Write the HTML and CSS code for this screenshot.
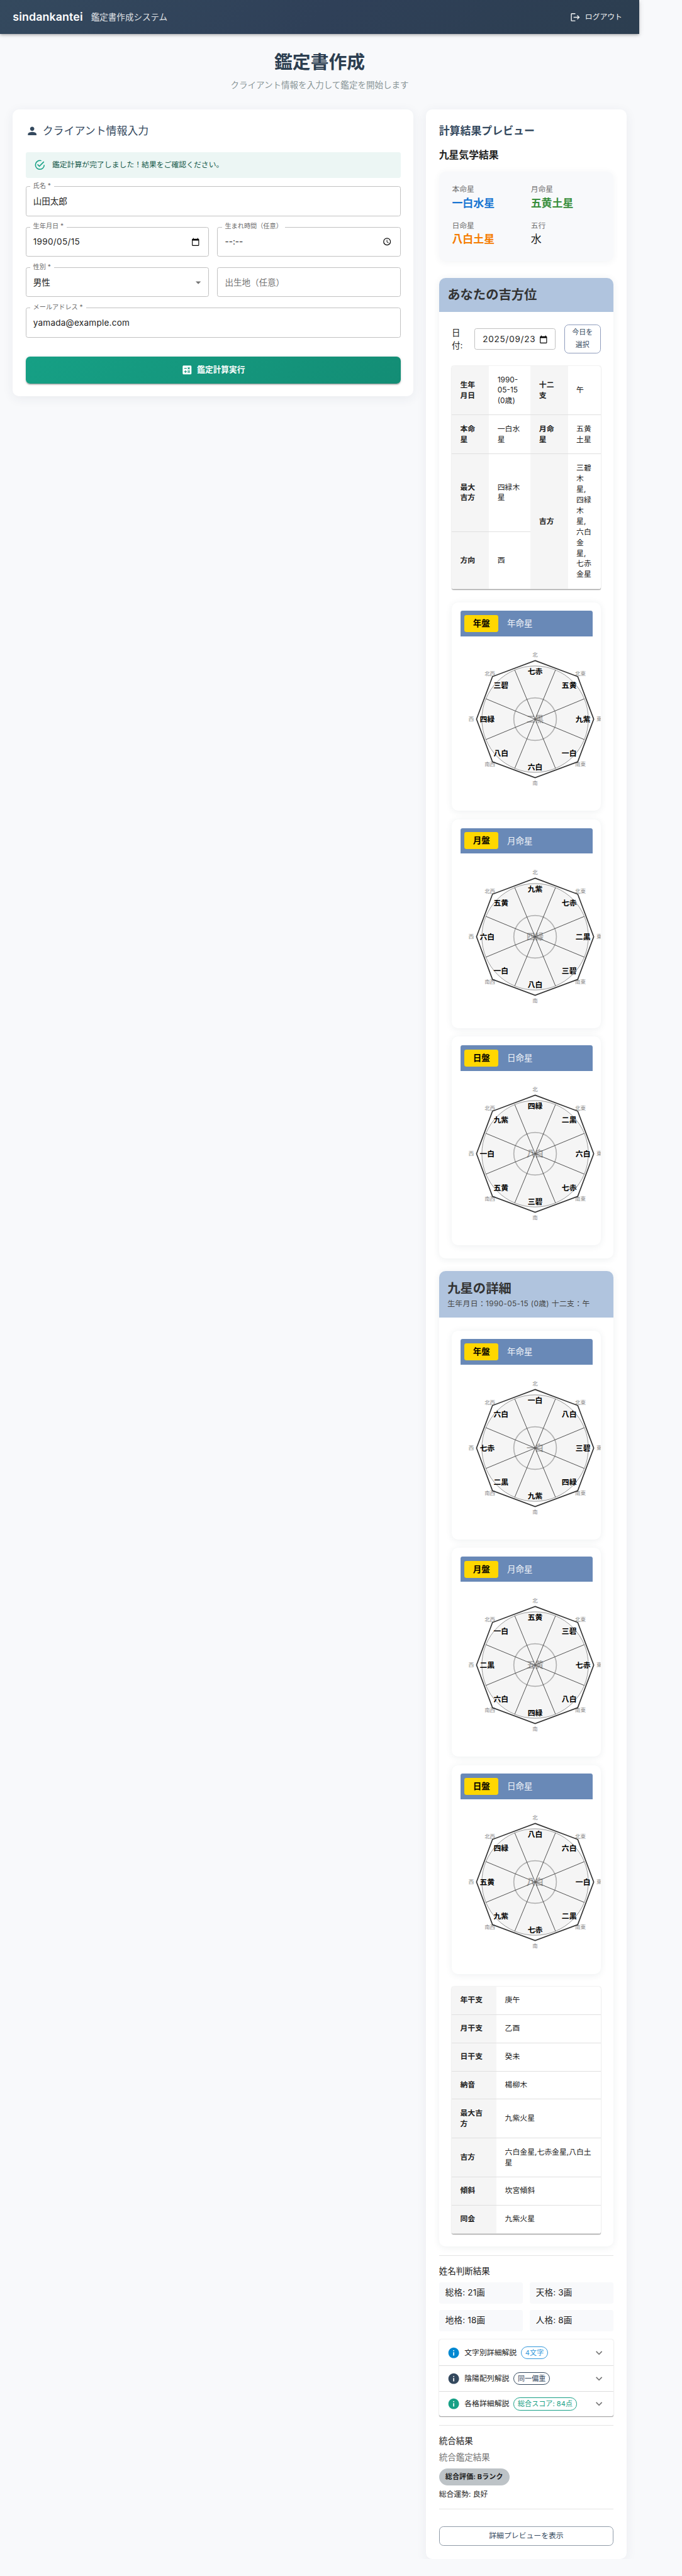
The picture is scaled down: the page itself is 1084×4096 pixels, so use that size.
FILE: index.html
```html
<!DOCTYPE html>
<html lang="ja">
<head>
<meta charset="utf-8">
<title>鑑定書作成</title>
<link rel="stylesheet" href="styles.css">
</head>
<body>
<header class="topbar">
  <span class="brand">sindankantei</span>
  <span class="system">鑑定書作成システム</span>
  <span class="logout">
    <svg width="20" height="20" viewBox="0 0 24 24"><path d="m17 7-1.410 1.410L18.170 11H8v2h10.170l-2.580 2.580L17 17l5-5zM4 5h8V3H4c-1.100 0-2 .9-2 2v14c0 1.100.9 2 2 2h8v-2H4z"/></svg>
    <span>ログアウト</span>
  </span>
</header>

<main class="page">
  <h1>鑑定書作成</h1>
  <p class="lead">クライアント情報を入力して鑑定を開始します</p>

  <div class="columns">
    <section class="card form-card">
      <h2 class="form-title">
        <svg width="24" height="24" viewBox="0 0 24 24"><path d="M12 12c2.210 0 4-1.790 4-4s-1.790-4-4-4-4 1.790-4 4 1.790 4 4 4zm0 2c-2.670 0-8 1.340-8 4v2h16v-2c0-2.660-5.330-4-8-4z"/></svg>
        <span>クライアント情報入力</span>
      </h2>
      <div class="alert">
        <svg width="22" height="22" viewBox="0 0 24 24"><path d="M20 12a8 8 0 0 1-8 8 8 8 0 0 1-8-8 8 8 0 0 1 8-8c.76 0 1.500.11 2.200.31l1.570-1.570A9.822 9.822 0 0 0 12 2 10 10 0 0 0 2 12a10 10 0 0 0 10 10 10 10 0 0 0 10-10M7.910 10.080 6.500 11.500 11 16 21 6l-1.410-1.420L11 13.170l-3.090-3.090z"/></svg>
        <span>鑑定計算が完了しました！結果をご確認ください。</span>
      </div>
      <div class="fields">
        <div class="field wide"><label>氏名 *</label><span class="value">山田太郎</span></div>
        <div class="field"><label>生年月日 *</label><span class="value date">1990/05/15</span><svg class="pick" width="16" height="16" viewBox="0 0 24 24"><path d="M20 3h-1V1h-2v2H7V1H5v2H4c-1.100 0-2 .9-2 2v16c0 1.100.9 2 2 2h16c1.100 0 2-.9 2-2V5c0-1.100-.9-2-2-2zm0 18H4V8h16v13z"/></svg></div>
        <div class="field"><label class="long">生まれ時間（任意）</label><span class="value">--:--</span><svg class="pick" width="17" height="17" viewBox="0 0 24 24"><path d="M12 2a10 10 0 1 0 0 20 10 10 0 0 0 0-20zm0 18a8 8 0 1 1 0-16 8 8 0 0 1 0 16zm.5-13H11v6l4.500 3.200.8-1.300-3.800-2.700z"/></svg></div>
        <div class="field"><label>性別 *</label><span class="value">男性</span><svg class="arrow" width="24" height="24" viewBox="0 0 24 24"><path d="m7 10 5 5 5-5z"/></svg></div>
        <div class="field"><span class="value hint">出生地（任意）</span></div>
        <div class="field wide"><label>メールアドレス *</label><span class="value mail">yamada@example.com</span></div>
      </div>
      <div class="submit">
        <svg width="22" height="22" viewBox="0 0 24 24"><path d="M19 3H5c-1.100 0-2 .9-2 2v14c0 1.100.9 2 2 2h14c1.100 0 2-.9 2-2V5c0-1.100-.9-2-2-2zm-5.970 4.060L14.090 6l1.410 1.410L16.910 6l1.060 1.060-1.410 1.410 1.410 1.410-1.060 1.060-1.410-1.400-1.410 1.410-1.060-1.060 1.410-1.410-1.410-1.420zm-6.780.66h5v1.500h-5v-1.500zM11.500 16h-2v2H8v-2H6v-1.500h2v-2h1.500v2h2V16zm6.500 1.250h-5v-1.500h5v1.500zm0-2.500h-5v-1.500h5v1.500z"/></svg>
        <span>鑑定計算実行</span>
      </div>
    </section>

    <section class="card result-card">
      <h2 class="result-title">計算結果プレビュー</h2>
      <h3 class="result-sub">九星気学結果</h3>

      <div class="stars">
        <div><small>本命星</small><b class="blue">一白水星</b></div>
        <div><small>月命星</small><b class="green">五黄土星</b></div>
        <div><small>日命星</small><b class="orange">八白土星</b></div>
        <div><small>五行</small><b class="plain">水</b></div>
      </div>

      <div class="panel first">
        <div class="panel-head"><h3>あなたの吉方位</h3></div>
        <div class="panel-body">
          <div class="date-row">
            <span class="date-label">日<br>付:</span>
            <span class="date-input"><span>2025/09/23</span><svg width="16" height="16" viewBox="0 0 24 24"><path d="M20 3h-1V1h-2v2H7V1H5v2H4c-1.100 0-2 .9-2 2v16c0 1.100.9 2 2 2h16c1.100 0 2-.9 2-2V5c0-1.100-.9-2-2-2zm0 18H4V8h16v13z"/></svg></span>
            <span class="today">今日を<br>選択</span>
          </div>
          <table class="info quad">
            <colgroup><col class="c1"><col class="c2"><col class="c3"><col class="c4"></colgroup>
            <tr class="r1"><th>生年<br>月日</th><td>1990-<br>05-15<br>(0歳)</td><th>十二<br>支</th><td>午</td></tr>
            <tr class="r2"><th>本命<br>星</th><td>一白水<br>星</td><th>月命<br>星</th><td>五黄<br>土星</td></tr>
            <tr class="r3"><th>最大<br>吉方</th><td>四緑木<br>星</td><th rowspan="2">吉方</th><td rowspan="2">三碧<br>木<br>星,<br>四緑<br>木<br>星,<br>六白<br>金<br>星,<br>七赤<br>金星</td></tr>
            <tr class="r4"><th>方向</th><td>西</td></tr>
          </table>

          <div class="chart">
            <div class="chart-head"><b>年盤</b><span>年命星</span></div>
            <svg class="chart-svg" width="280" height="280" viewBox="-140 -140 280 280" data-center="二黒" data-stars="七赤 五黄 九紫 一白 六白 八白 四緑 三碧"></svg>
          </div>
          <div class="chart">
            <div class="chart-head"><b>月盤</b><span>月命星</span></div>
            <svg class="chart-svg" width="280" height="280" viewBox="-140 -140 280 280" data-center="四緑" data-stars="九紫 七赤 二黒 三碧 八白 一白 六白 五黄"></svg>
          </div>
          <div class="chart">
            <div class="chart-head"><b>日盤</b><span>日命星</span></div>
            <svg class="chart-svg" width="280" height="280" viewBox="-140 -140 280 280" data-center="八白" data-stars="四緑 二黒 六白 七赤 三碧 五黄 一白 九紫"></svg>
          </div>
        </div>
      </div>

      <div class="panel">
        <div class="panel-head"><h3>九星の詳細</h3><p>生年月日：1990-05-15 (0歳) 十二支：午</p></div>
        <div class="panel-body">
          <div class="chart">
            <div class="chart-head"><b>年盤</b><span>年命星</span></div>
            <svg class="chart-svg" width="280" height="280" viewBox="-140 -140 280 280" data-center="一白" data-stars="一白 八白 三碧 四緑 九紫 二黒 七赤 六白"></svg>
          </div>
          <div class="chart">
            <div class="chart-head"><b>月盤</b><span>月命星</span></div>
            <svg class="chart-svg" width="280" height="280" viewBox="-140 -140 280 280" data-center="五黄" data-stars="五黄 三碧 七赤 八白 四緑 六白 二黒 一白"></svg>
          </div>
          <div class="chart">
            <div class="chart-head"><b>日盤</b><span>日命星</span></div>
            <svg class="chart-svg" width="280" height="280" viewBox="-140 -140 280 280" data-center="八白" data-stars="八白 六白 一白 二黒 七赤 九紫 五黄 四緑"></svg>
          </div>
          <table class="info pair">
            <colgroup><col class="p1"><col></colgroup>
            <tr><th>年干支</th><td>庚午</td></tr>
            <tr><th>月干支</th><td>乙酉</td></tr>
            <tr><th>日干支</th><td>癸未</td></tr>
            <tr><th>納音</th><td>楊柳木</td></tr>
            <tr class="tall"><th>最大吉<br>方</th><td>九紫火星</td></tr>
            <tr class="tall"><th>吉方</th><td>六白金星,七赤金星,八白土<br>星</td></tr>
            <tr><th>傾斜</th><td>坎宮傾斜</td></tr>
            <tr><th>同会</th><td>九紫火星</td></tr>
          </table>
        </div>
      </div>

      <div class="block names">
        <h4>姓名判断結果</h4>
        <div class="counts"><span>総格: 21画</span><span>天格: 3画</span><span>地格: 18画</span><span>人格: 8画</span></div>
        <div class="accordion">
          <div class="acc-row sky"><svg class="info-ic" width="24" height="24" viewBox="0 0 24 24"><path d="M12 2C6.480 2 2 6.480 2 12s4.480 10 10 10 10-4.480 10-10S17.520 2 12 2zm1 15h-2v-6h2v6zm0-8h-2V7h2v2z"/></svg><span>文字別詳細解説</span><em>4文字</em><svg class="more" width="24" height="24" viewBox="0 0 24 24"><path d="M16.590 8.590 12 13.170 7.410 8.590 6 10l6 6 6-6z"/></svg></div>
          <div class="acc-row navy"><svg class="info-ic" width="24" height="24" viewBox="0 0 24 24"><path d="M12 2C6.480 2 2 6.480 2 12s4.480 10 10 10 10-4.480 10-10S17.520 2 12 2zm1 15h-2v-6h2v6zm0-8h-2V7h2v2z"/></svg><span>陰陽配列解説</span><em>同一偏重</em><svg class="more" width="24" height="24" viewBox="0 0 24 24"><path d="M16.590 8.590 12 13.170 7.410 8.590 6 10l6 6 6-6z"/></svg></div>
          <div class="acc-row teal"><svg class="info-ic" width="24" height="24" viewBox="0 0 24 24"><path d="M12 2C6.480 2 2 6.480 2 12s4.480 10 10 10 10-4.480 10-10S17.520 2 12 2zm1 15h-2v-6h2v6zm0-8h-2V7h2v2z"/></svg><span>各格詳細解説</span><em>総合スコア: 84点</em><svg class="more" width="24" height="24" viewBox="0 0 24 24"><path d="M16.590 8.590 12 13.170 7.410 8.590 6 10l6 6 6-6z"/></svg></div>
        </div>
      </div>

      <div class="block total">
        <h4>統合結果</h4>
        <p class="muted">統合鑑定結果</p>
        <span class="rank">総合評価: Bランク</span>
        <p class="luck">総合運勢: 良好</p>
      </div>

      <div class="block actions"><div class="preview">詳細プレビューを表示</div></div>
    </section>
  </div>
</main>
<script src="charts.js"></script>
</body>
</html>
```

FILE: charts.js
```js
// Draws each direction board: eight stars clockwise from north, one in the centre.
const points = [
  ['北', 0, -1], ['北東', 1, -1], ['東', 1, 0], ['南東', 1, 1],
  ['南', 0, 1], ['南西', -1, 1], ['西', -1, 0], ['北西', -1, -1]
];

function label(text, x, y) {
  return `<text x="${x}" y="${y}">${text}</text>`;
}

document.querySelectorAll('.chart-svg').forEach((svg) => {
  const stars = svg.dataset.stars.split(' ');
  const directions = points.map(([name, dx, dy]) => {
    const r = dx && dy ? 85 : 120;
    return label(name, dx * r, dy * r + 3);
  }).join('');
  const names = points.map(([, dx, dy], i) => {
    const r = dx && dy ? 64 : 90;
    return label(stars[i], dx * r, dy * r + 5);
  }).join('');
  svg.innerHTML = `
    <circle class="b-disc" r="100"/>
    <g class="b-dir">${directions}</g>
    <path class="b-oct" d="M0-110 80-80 110 0 80 80 0 110-80 80-110 0-80-80Z"/>
    <circle class="b-core" r="40"/>
    <text class="core" x="0" y="5">${svg.dataset.center}</text>
    <path class="b-spoke" d="M-38.3-92.4 38.3 92.4M38.3-92.4-38.3 92.4M-92.4-38.3 92.4 38.3M92.4-38.3-92.4 38.3"/>
    <g class="star">${names}</g>`;
});
```

FILE: styles.css
```css
* { box-sizing: border-box; }
html { background: #f8f9fb; }
body {
  margin: 0;
  background: #f8f9fb;
  color: #212121;
  font-family: Inter, "Noto Sans CJK JP", sans-serif;
  font-size: 16px;
  line-height: 24px;
}
h1, h2, h3, h4, p { margin: 0; font-weight: 400; }
svg { display: block; flex: none; fill: currentColor; }

.topbar, .page { zoom: 0.8467; width: 1200px; }
.topbar {
  display: flex;
  align-items: center;
  height: 64px;
  padding: 0 32px 0 24px;
  color: #fff;
  background: linear-gradient(135deg, #34495e 0%, #2f4058 50%, #2c3e50 100%);
  box-shadow: 0 2px 4px -1px rgba(0,0,0,.2), 0 4px 5px rgba(0,0,0,.14), 0 1px 10px rgba(0,0,0,.12);
}
.brand { width: 147px; font-size: 21px; font-weight: 600; letter-spacing: .15px; white-space: nowrap; }
.system { opacity: .85; }
.logout { display: flex; align-items: center; gap: 8px; margin-left: auto; font-size: 14px; opacity: .95; }

.page { padding: 32px 24px 0; }
h1 { text-align: center; font-size: 34px; line-height: 42px; font-weight: 700; color: #2c3e50; }
.lead { margin-top: 10px; text-align: center; color: #8a9698; }

.columns { display: grid; grid-template-columns: 752px 376px; gap: 24px; align-items: start; margin-top: 34px; }
.card { padding: 24px; border-radius: 12px; background: #fff; box-shadow: 0 4px 20px rgba(44,62,80,.07); }

.form-card { height: 538px; }
.form-title { display: flex; align-items: center; gap: 8px; height: 32px; font-size: 20px; color: #34495e; }
.alert { display: flex; align-items: center; gap: 12px; height: 48px; margin-top: 24px; padding: 0 16px; border-radius: 4px; background: #ecf6f4; color: #14594a; font-size: 14px; }
.alert svg { color: #16a085; }
.fields { display: grid; grid-template-columns: 1fr 1fr; gap: 20px 16px; margin-top: 16px; }
.field { position: relative; display: flex; align-items: center; height: 56px; padding: 0 16px 0 13px; border: 1px solid #c1c1c1; border-radius: 4px; }
.wide { grid-column: 1 / -1; }
.field label { position: absolute; left: 8px; top: -10px; padding: 0 6px 0 5px; line-height: 16px; font-size: 12px; color: #6b6b6b; background: #fff; white-space: nowrap; }
.field .long { padding-right: 5px; }
.date { letter-spacing: .4px; }
.mail { letter-spacing: .3px; }
.hint { color: #757575; }
.pick { margin-left: auto; color: #000; }
.arrow { margin: 0 -9px 0 auto; color: #757575; }
.submit { display: flex; align-items: center; justify-content: center; gap: 8px; height: 50px; margin-top: 36px; border-radius: 8px; color: #fff; font-size: 15px; font-weight: 700; background: linear-gradient(135deg, #16a085, #138d75); box-shadow: 0 3px 1px -2px rgba(0,0,0,.2), 0 2px 2px rgba(0,0,0,.14), 0 1px 5px rgba(0,0,0,.12); }

.result-card { height: 4600px; }
.result-title { height: 32px; line-height: 32px; font-size: 20px; font-weight: 700; color: #34495e; }
.result-sub { margin-top: 16px; line-height: 28px; font-weight: 700; }
.stars { display: grid; grid-template-columns: 1fr 1fr; gap: 16px; height: 168px; margin-top: 16px; padding: 24px; border-radius: 12px; background: #f8f9fb; box-shadow: 0 2px 12px rgba(44,62,80,.06); }
.stars div { padding-left: .5px; }
.stars small { display: block; line-height: 20px; font-size: 14px; color: #707070; }
.stars b { display: block; line-height: 32px; font-size: 20px; }
.blue { color: #1976d2; }
.green { color: #388e3c; }
.orange { color: #f57c00; }
.stars .plain { font-weight: 400; }

.panel { margin-top: 24px; border-radius: 12px; overflow: hidden; background: #fff; box-shadow: 0 2px 12px rgba(44,62,80,.08); }
.panel.first { margin-top: 32px; }
.panel-head { padding: 16px; background: #b0c4de; }
.panel-head h3 { line-height: 32px; font-size: 24px; font-weight: 700; color: #333; }
.panel-head p { margin-top: 4px; line-height: 20px; font-size: 14px; letter-spacing: .4px; color: #444; white-space: nowrap; }
.panel-body { display: flex; flex-direction: column; gap: 16px; padding: 24px; }

.date-row { display: flex; align-items: center; height: 54px; margin-bottom: 8px; }
.date-label { width: 43px; }
.date-input { display: flex; align-items: center; width: 152px; height: 40px; padding: 0 14px; border: 1px solid #c1c1c1; border-radius: 4px; white-space: nowrap; }
.date-input span { width: 106px; letter-spacing: .9px; }
.date-input svg { color: #000; }
.today { width: 69px; height: 54px; margin-left: auto; padding-top: 2px; border: 1px solid #8f9dbd; border-radius: 8px; text-align: center; font-size: 13px; line-height: 23px; color: #34495e; }

.info { width: 280px; border-collapse: separate; border-spacing: 0; table-layout: fixed; border-radius: 4px; overflow: hidden; background: #fff; box-shadow: 0 2px 1px -1px rgba(0,0,0,.2), 0 1px 1px rgba(0,0,0,.14), 0 1px 3px rgba(0,0,0,.12); font-size: 14px; line-height: 20px; }
.info th, .info td { padding: 0 0 0 16px; border-bottom: 1px solid #e0e0e0; text-align: left; vertical-align: middle; white-space: nowrap; }
.info th { font-weight: 700; background: #f5f5f5; }
.c1, .c3 { width: 70px; }
.c2 { width: 78px; }
.c4 { width: 62px; }
.quad { margin-bottom: 8px; }
.r1 { height: 92px; }
.r2 { height: 73px; }
.r3 { height: 146px; }
.r4 { height: 108px; }
.p1 { width: 84px; }
.pair { margin-top: 8px; }
.pair tr { height: 53px; }
.pair .tall { height: 73px; }

.chart { height: 392px; padding: 16px; border-radius: 12px; overflow: hidden; background: #fff; box-shadow: 0 2px 12px rgba(44,62,80,.08); }
.chart-head { display: flex; align-items: center; gap: 16px; height: 48px; padding: 0 8px; border-radius: 4px 4px 0 0; background: #6989b7; color: #f0f3f8; }
.chart-head b { width: 64px; height: 32px; line-height: 31px; border-radius: 4px; background: #ffd700; color: #000; text-align: center; }
.chart-svg { margin-top: 16px; text-anchor: middle; }
.b-disc { fill: #f5f5f5; stroke: #666; stroke-width: .8; }
.b-oct { fill: none; stroke: #333; stroke-width: 2; }
.b-core { fill: none; stroke: #b3b3b3; stroke-width: 2; }
.b-spoke { fill: none; stroke: #333; stroke-width: 1; }
.b-dir { font-size: 10px; fill: #888; }
.core { font-size: 16px; font-weight: 700; fill: #aaa; }
.star { font-size: 14px; font-weight: 700; fill: #000; }

.block { margin-top: 16px; border-top: 1px solid #e4e4e4; }
.block h4 { line-height: 28px; }
.names { padding-top: 16px; }
.counts { display: grid; grid-template-columns: 1fr 1fr; gap: 12px; margin-top: 6px; }
.counts span { height: 40px; line-height: 40px; padding-left: 12px; border-radius: 4px; background: #f8f9fb; letter-spacing: .2px; }
.accordion { margin-top: 16px; border-radius: 4px; box-shadow: 0 2px 1px -1px rgba(0,0,0,.2), 0 1px 1px rgba(0,0,0,.14), 0 1px 3px rgba(0,0,0,.12); }
.acc-row { display: flex; align-items: center; gap: 8px; height: 48px; padding: 0 16px; font-size: 14px; }
.acc-row + .acc-row { border-top: 1px solid #dcdcdc; }
.acc-row em { height: 24px; line-height: 22px; padding: 0 7px; border: 1px solid; border-radius: 12px; font-style: normal; font-size: 13px; letter-spacing: .1px; white-space: nowrap; }
.more { margin-left: auto; color: #757575; }
.sky .info-ic { color: #0288d1; }
.sky em { color: #3498db; }
.navy .info-ic, .navy em { color: #34495e; }
.teal .info-ic, .teal em { color: #16a085; }

.total { padding-top: 15px; }
.muted { margin-top: 5px; color: #777; }
.rank { display: inline-block; height: 32px; line-height: 31px; margin-top: 8px; padding: 0 12px; border-radius: 16px; background: #bdc3c7; font-size: 13px; font-weight: 700; letter-spacing: .15px; white-space: nowrap; }
.luck { font-size: 14px; line-height: 20px; margin-top: 8px; }
.actions { padding-top: 32px; }
.preview { height: 37px; line-height: 35px; border: 1px solid #8f9ba8; border-radius: 8px; text-align: center; font-size: 14px; color: #34495e; }
```
